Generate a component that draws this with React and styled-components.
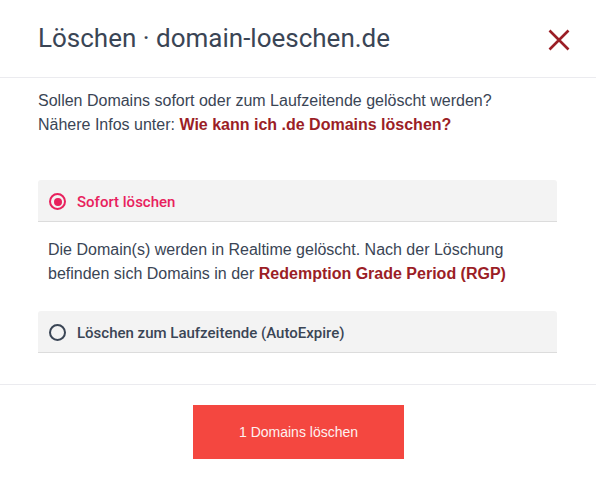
import React, { useState } from 'react';
import styled, { createGlobalStyle } from 'styled-components';

const GlobalStyle = createGlobalStyle`
	html, body {
		margin: 0;
		padding: 0;
		background: #ffffff;
	}
	body {
		font-family: 'Liberation Sans', Arial, sans-serif;
		color: #3a4555;
	}
	* {
		box-sizing: border-box;
	}
`;

const Modal = styled.div`
	width: 596px;
	height: 478px;
	display: flex;
	flex-direction: column;
	background: #ffffff;
`;

const Header = styled.div`
	height: 78px;
	padding: 0 26px 0 38px;
	display: flex;
	align-items: center;
	justify-content: space-between;
	border-bottom: 1px solid #ebebef;
`;

const Title = styled.h2`
	margin: 0 0 1px 0;
	font-family: Roboto, 'Liberation Sans', sans-serif;
	font-weight: 400;
	font-size: 26px;
	color: #3a4555;
`;

const CloseButton = styled.button`
	border: 0;
	background: none;
	padding: 0;
	width: 22px;
	height: 22px;
	cursor: pointer;
	margin-top: 2px;
`;

const Body = styled.div`
	padding: 11px 39px 0 38px;
`;

const Text = styled.p`
	margin: 0;
	font-size: 16px;
	line-height: 24px;
	color: #3a4555;
`;

const Link = styled.a`
	color: #9b1e26;
	font-weight: 700;
	text-decoration: none;
`;

const Options = styled.div`
	margin-top: 43px;
	display: flex;
	flex-direction: column;
`;

const Option = styled.label`
	height: 42px;
	display: flex;
	align-items: center;
	gap: 11px;
	padding: 2px 0 0 11px;
	background: #f3f3f3;
	border-bottom: 1px solid #dcdcdc;
	border-radius: 3px 3px 0 0;
	cursor: pointer;
	font-family: Roboto, 'Liberation Sans', sans-serif;
	font-weight: 500;
	font-size: 15px;
	color: ${(p) => (p.$active ? '#e8215d' : '#3a4555')};
`;

const Radio = styled.span`
	width: 17px;
	height: 17px;
	border-radius: 50%;
	border: 2px solid ${(p) => (p.$active ? '#e8215d' : '#3a4555')};
	display: flex;
	align-items: center;
	justify-content: center;
	&::after {
		content: '';
		width: 8px;
		height: 8px;
		border-radius: 50%;
		background: #e8215d;
		display: ${(p) => (p.$active ? 'block' : 'none')};
	}
`;

const Description = styled(Text)`
	padding: 16px 0 25px 10px;
`;

const Footer = styled.div`
	margin-top: 31px;
	border-top: 1px solid #ebebef;
	padding-top: 20px;
	display: flex;
	justify-content: center;
`;

const SubmitButton = styled.button`
	width: 211px;
	height: 54px;
	border: 0;
	background: #f44740;
	color: #fdf1f0;
	font-family: 'Liberation Sans', Arial, sans-serif;
	font-size: 14px;
	cursor: pointer;
	margin-left: 1px;
`;

const App = () => {
	const [mode, setMode] = useState('now');

	return (
		<>
			<GlobalStyle />
			<Modal>
				<Header>
					<Title>Löschen · domain-loeschen.de</Title>
					<CloseButton aria-label="Schließen">
						<svg width="22" height="22" viewBox="0 0 22 22">
							<path
								d="M1.5 1.5 L20.5 20.5 M20.5 1.5 L1.5 20.5"
								stroke="#9b1e26"
								strokeWidth="2.6"
								fill="none"
							/>
						</svg>
					</CloseButton>
				</Header>
				<Body>
					<Text>
						Sollen Domains sofort oder zum Laufzeitende gelöscht werden?
						<br />
						Nähere Infos unter: <Link href="#">Wie kann ich .de Domains löschen?</Link>
					</Text>
					<Options>
						<Option $active={mode === 'now'} onClick={() => setMode('now')}>
							<Radio $active={mode === 'now'} />
							Sofort löschen
						</Option>
						<Description>
							Die Domain(s) werden in Realtime gelöscht. Nach der Löschung
							<br />
							befinden sich Domains in der <Link href="#">Redemption Grade Period (RGP)</Link>
						</Description>
						<Option $active={mode === 'expire'} onClick={() => setMode('expire')}>
							<Radio $active={mode === 'expire'} />
							Löschen zum Laufzeitende (AutoExpire)
						</Option>
					</Options>
				</Body>
				<Footer>
					<SubmitButton>1 Domains löschen</SubmitButton>
				</Footer>
			</Modal>
		</>
	);
};

export default App;
